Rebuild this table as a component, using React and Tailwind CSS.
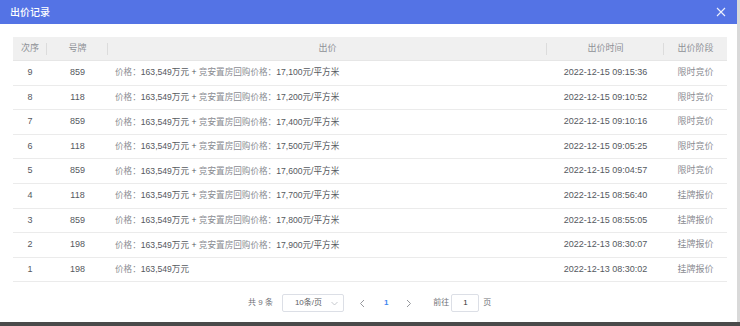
import React from 'react';

const rows = [
  { no: 9, plate: '859', extra: '17,100', time: '2022-12-15 09:15:36', stage: '限时竞价' },
  { no: 8, plate: '118', extra: '17,200', time: '2022-12-15 09:10:52', stage: '限时竞价' },
  { no: 7, plate: '859', extra: '17,400', time: '2022-12-15 09:10:16', stage: '限时竞价' },
  { no: 6, plate: '118', extra: '17,500', time: '2022-12-15 09:05:25', stage: '限时竞价' },
  { no: 5, plate: '859', extra: '17,600', time: '2022-12-15 09:04:57', stage: '限时竞价' },
  { no: 4, plate: '118', extra: '17,700', time: '2022-12-15 08:56:40', stage: '挂牌报价' },
  { no: 3, plate: '859', extra: '17,800', time: '2022-12-15 08:55:05', stage: '挂牌报价' },
  { no: 2, plate: '198', extra: '17,900', time: '2022-12-13 08:30:07', stage: '挂牌报价' },
  { no: 1, plate: '198', extra: null, time: '2022-12-13 08:30:02', stage: '挂牌报价' },
];

const font = { fontFamily: '"Liberation Sans", "Noto Sans CJK SC", sans-serif' };

const HeadCell = ({ children, w, last }) => (
  <div className={`${w} relative flex items-center justify-center`}>
    {children}
    {!last && <span className="absolute right-0 top-1/2 -translate-y-1/2 h-[12px] w-px bg-[#dcdcdc]" />}
  </div>
);

export default function App() {
  return (
    <div className="w-[740px] h-[326px] bg-[#4a4a4a] overflow-hidden" style={font}>
      <div className="w-[740px] h-[322px] bg-white border-r-[3px] border-[#d9d9d9] flex flex-col">
        {/* title bar */}
        <div className="h-[24px] bg-[#5473e5] flex items-center justify-between pl-[10px] pr-[11px] shrink-0">
          <span className="text-white text-[10px] font-medium">出价记录</span>
          <svg width="10" height="10" viewBox="0 0 10 10" className="text-white/90">
            <path d="M1 1 L9 9 M9 1 L1 9" stroke="currentColor" strokeWidth="1.1" fill="none" />
          </svg>
        </div>

        {/* table */}
        <div className="mt-[13px] ml-[13px] w-[714px] text-[9px]">
          <div className="h-[24px] bg-[#f0f0f0] flex text-[#8e9096] border-b border-[#e6e6e6]">
            <HeadCell w="w-[34px]">次序</HeadCell>
            <HeadCell w="w-[61px]">号牌</HeadCell>
            <HeadCell w="w-[439px]">出价</HeadCell>
            <HeadCell w="w-[117px]">出价时间</HeadCell>
            <HeadCell w="w-[63px]" last>出价阶段</HeadCell>
          </div>
          {rows.map((r) => (
            <div key={r.no} className="h-[24.6px] flex items-center border-b border-[#ebebeb] text-[#55585e]">
              <div className="w-[34px] text-center">{r.no}</div>
              <div className="w-[61px] text-center">{r.plate}</div>
              <div className="w-[439px] pl-[7px] text-[8.6px]">
                <span className="text-[#8a8c92]">价格：</span>
                <span>163,549万元</span>
                {r.extra && (
                  <>
                    <span> + </span>
                    <span className="text-[#8a8c92]">竞安置房回购价格：</span>
                    <span>{r.extra}元/平方米</span>
                  </>
                )}
              </div>
              <div className="w-[117px] text-center">{r.time}</div>
              <div className="w-[63px] text-center text-[#8a8c92]">{r.stage}</div>
            </div>
          ))}
        </div>

        {/* pagination */}
        <div className="mt-[12px] flex items-center text-[8px] text-[#707278] pl-[248px]">
          <span>共 9 条</span>
          <div className="ml-[9px] w-[62px] h-[18px] border border-[#dcdfe6] rounded-[2px] flex items-center justify-between pl-[12px] pr-[5px] text-[#606266]">
            <span>10条/页</span>
            <svg width="7" height="5" viewBox="0 0 7 5">
              <path d="M0.5 1 L3.5 4 L6.5 1" stroke="#b8bbc2" strokeWidth="0.8" fill="none" />
            </svg>
          </div>
          <svg width="6" height="9" viewBox="0 0 6 9" className="ml-[15px]">
            <path d="M5 1 L1.5 4.5 L5 8" stroke="#8a8c92" strokeWidth="0.9" fill="none" />
          </svg>
          <span className="ml-[19px] text-[#3f86f0] font-bold">1</span>
          <svg width="6" height="9" viewBox="0 0 6 9" className="ml-[18px]">
            <path d="M1 1 L4.5 4.5 L1 8" stroke="#8a8c92" strokeWidth="0.9" fill="none" />
          </svg>
          <span className="ml-[21px]">前往</span>
          <div className="ml-[2px] w-[28px] h-[18px] border border-[#dcdfe6] rounded-[2px] flex items-center justify-center text-[#303133]">1</div>
          <span className="ml-[4px]">页</span>
        </div>
      </div>
    </div>
  );
}
